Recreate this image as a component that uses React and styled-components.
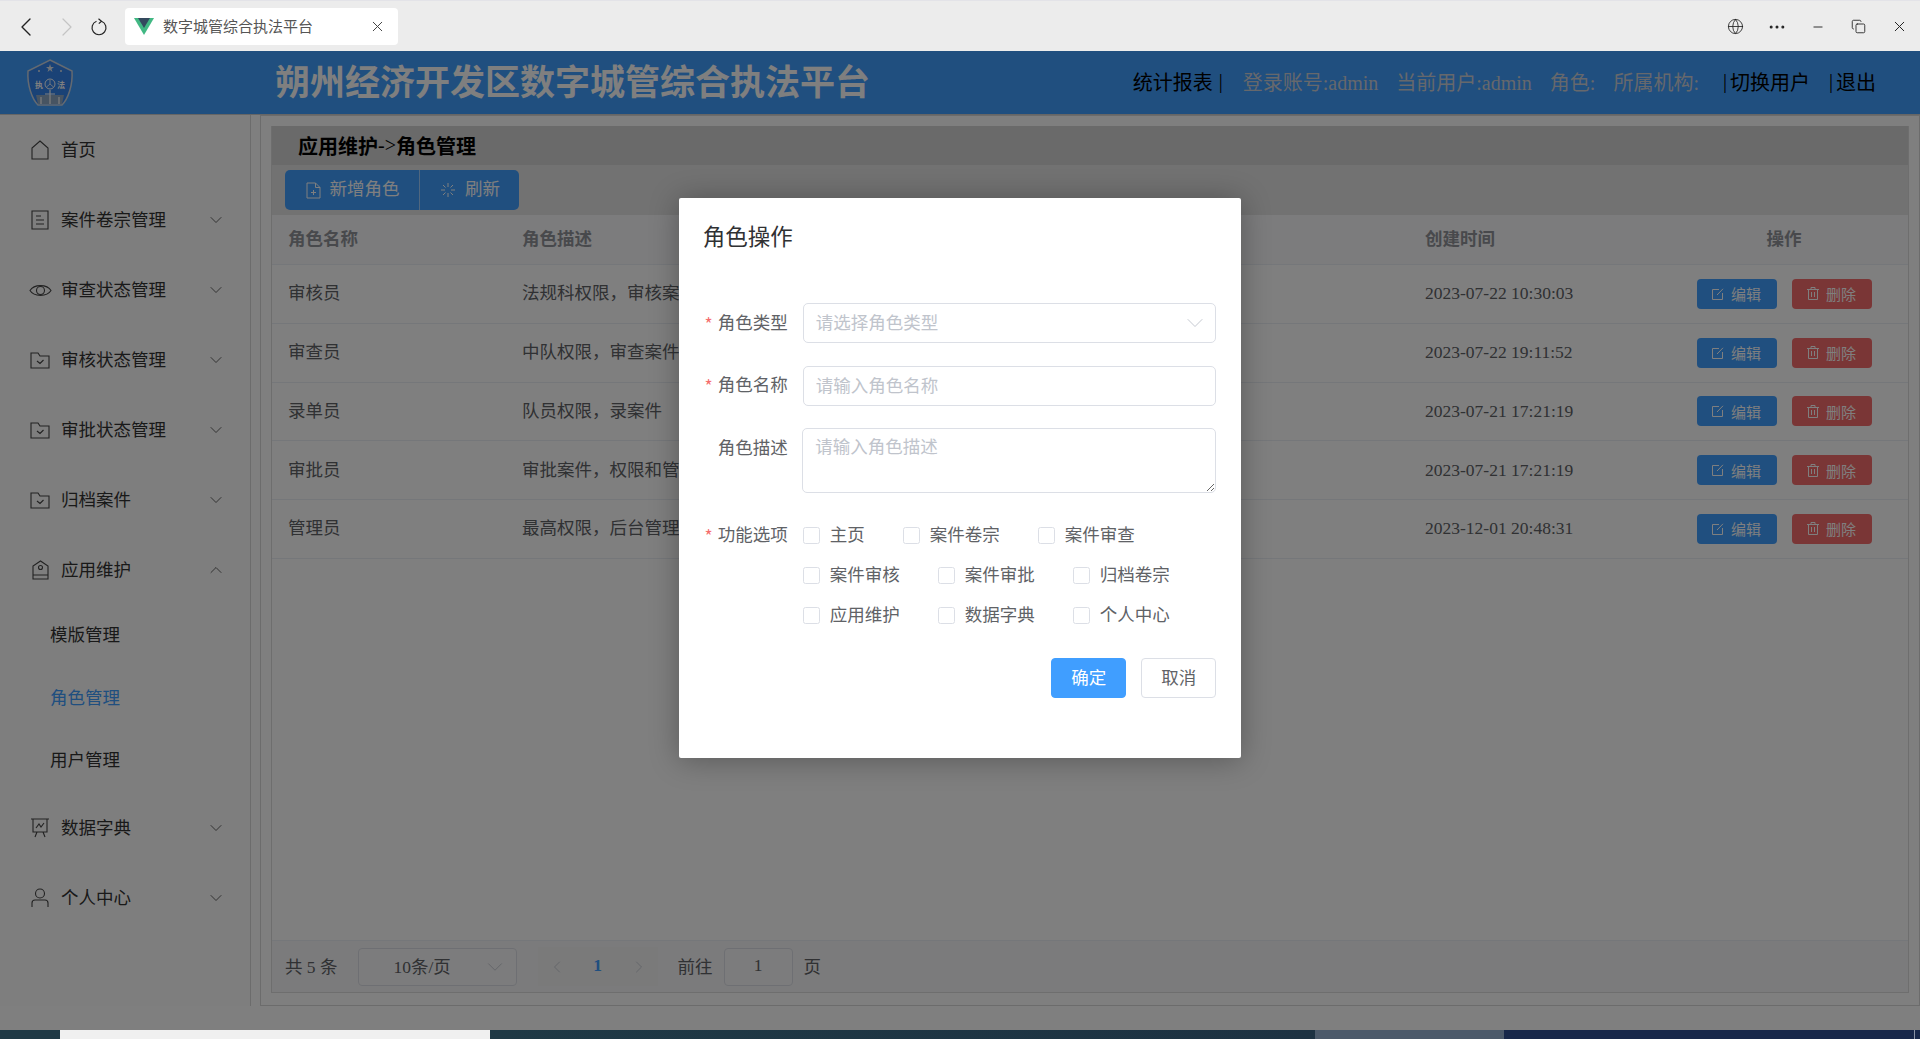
import React from 'react';
import styled, { createGlobalStyle } from 'styled-components';
import { ChevronDown, ChevronUp, ChevronLeft, ChevronRight, X, Globe, Ellipsis, Minus, Copy } from 'lucide-react';

const FONT = '"Liberation Serif", "Noto Sans CJK SC", serif';

const MENU = [
  { label: '首页', icon: 'home' },
  { label: '案件卷宗管理', icon: 'doc', arrow: 'down' },
  { label: '审查状态管理', icon: 'eye', arrow: 'down' },
  { label: '审核状态管理', icon: 'folder', arrow: 'down' },
  { label: '审批状态管理', icon: 'folder', arrow: 'down' },
  { label: '归档案件', icon: 'folder', arrow: 'down' },
  { label: '应用维护', icon: 'stamp', arrow: 'up', children: ['模版管理', '角色管理', '用户管理'] },
  { label: '数据字典', icon: 'board', arrow: 'down' },
  { label: '个人中心', icon: 'user', arrow: 'down' },
];

const ROLES = [
  ['审核员', '法规科权限，审核案件', '2023-07-22 10:30:03'],
  ['审查员', '中队权限，审查案件', '2023-07-22 19:11:52'],
  ['录单员', '队员权限，录案件', '2023-07-21 17:21:19'],
  ['审批员', '审批案件，权限和管理', '2023-07-21 17:21:19'],
  ['管理员', '最高权限，后台管理', '2023-12-01 20:48:31'],
];

const FEATURES = ['主页', '案件卷宗', '案件审查', '案件审核', '案件审批', '归档卷宗', '应用维护', '数据字典', '个人中心'];

const MenuIcon = ({ name }) => {
  const common = { fill: 'none', stroke: 'currentColor', strokeWidth: 1.1 };
  if (name === 'home') {
    return (
      <svg width="18" height="20" viewBox="0 0 18 20" {...common}>
        <path d="M9 1 L17 8 V19 H1 V8 Z" />
      </svg>
    );
  }
  if (name === 'doc') {
    return (
      <svg width="18" height="20" viewBox="0 0 18 20" {...common}>
        <path d="M1 1 H17 V19 H1 Z M5 6 H10 M5 10 H13 M5 14 H13" />
      </svg>
    );
  }
  if (name === 'eye') {
    return (
      <svg width="23" height="15" viewBox="0 0 23 15" {...common}>
        <path d="M1 7.5 C5 1 18 1 22 7.5 C18 14 5 14 1 7.5 Z" />
        <circle cx="11.5" cy="7.5" r="4" />
      </svg>
    );
  }
  if (name === 'folder') {
    return (
      <svg width="20" height="17" viewBox="0 0 20 17" {...common}>
        <path d="M1 1 H8 L10 4 H19 V16 H1 Z M7 9 L10 11.5 L13.5 8" />
      </svg>
    );
  }
  if (name === 'stamp') {
    return (
      <svg width="17" height="20" viewBox="0 0 17 20" {...common}>
        <path d="M1 15 V6 L8.5 1 L16 6 V15 Z M1 15 V19 H16 V15" />
        <circle cx="8.5" cy="7.5" r="2" />
      </svg>
    );
  }
  if (name === 'board') {
    return (
      <svg width="20" height="20" viewBox="0 0 20 20" {...common}>
        <path d="M1 1 H19 M3 1 V14 H17 V1 M7 14 L5 19 M13 14 L15 19 M6 10 L9 6 L11 9 L14 5" />
      </svg>
    );
  }
  return (
    <svg width="18" height="20" viewBox="0 0 18 20" {...common}>
      <circle cx="9" cy="5.5" r="4.5" />
      <path d="M1 19 V15 Q1 12 4 12 H14 Q17 12 17 15 V19" />
    </svg>
  );
};

const VueLogo = () => (
  <svg width="20" height="17" viewBox="0 0 20 17">
    <path d="M0 0 H20 L10 17 Z" fill="#41b883" />
    <path d="M4 0 H16 L10 10 Z" fill="#34495e" />
  </svg>
);

const ReloadIcon = () => (
  <svg width="18" height="18" viewBox="0 0 18 18" fill="none" stroke="#222" strokeWidth="1.2">
    <path d="M11.5 3.2 A7 7 0 1 1 6.5 3.2 M8.5 .8 L11.5 3.2 L8.8 5.6" />
  </svg>
);

const Badge = () => (
  <svg width="48" height="48" viewBox="0 0 48 48">
    <path d="M24 1 L46 12 C47 26 42 40 36 46 H12 C6 40 1 26 2 12 Z" fill="#3484ec" stroke="#c8d4e2" strokeWidth="1.5" />
    <path d="M24 5 L25 8 H28 L25.5 10 L26.5 13 L24 11 L21.5 13 L22.5 10 L20 8 H23 Z" fill="#dfe6ee" />
    <circle cx="13" cy="12" r="1" fill="#dfe6ee" />
    <circle cx="35" cy="12" r="1" fill="#dfe6ee" />
    <circle cx="24" cy="25" r="5" fill="none" stroke="#ffffff" strokeWidth="1" />
    <path d="M24 21 V25 L20.5 28 M24 25 L27.5 28" stroke="#ffffff" strokeWidth="0.8" fill="none" />
    <text x="9" y="29" fontSize="8" fontWeight="700" fill="#ffffff" fontFamily="Noto Sans CJK SC">执</text>
    <text x="31" y="29" fontSize="8" fontWeight="700" fill="#ffffff" fontFamily="Noto Sans CJK SC">法</text>
    <path d="M10 36 H38 L36 45 H12 Z" fill="#8ea8c4" />
    <path d="M24 31 V45 M19 35 H29 M15 38 V45 M33 38 V45" stroke="#ffffff" strokeWidth="1.2" fill="none" />
  </svg>
);

const PlusFile = () => (
  <svg width="15" height="17" viewBox="0 0 15 17" fill="none" stroke="currentColor" strokeWidth="1">
    <path d="M1 1 H9.5 L14 5.5 V16 H1 Z M9.5 1 V5.5 H14 M7.5 8 V13 M5 10.5 H10" />
  </svg>
);

const Spinner = () => (
  <svg width="16" height="16" viewBox="0 0 16 16" fill="none" stroke="currentColor" strokeWidth="1">
    <path d="M8 1 V5 M8 11 V15 M1 8 H5 M11 8 H15 M3 3 L5.5 5.5 M13 3 L10.5 5.5 M3 13 L5.5 10.5 M13 13 L10.5 10.5" />
  </svg>
);

const EditIcon = () => (
  <svg width="12" height="12" viewBox="0 0 12 12" fill="none" stroke="currentColor" strokeWidth="1">
    <path d="M7 1.5 H.5 V11.5 H10.5 V5 M5 7 L11 .8" />
  </svg>
);

const TrashIcon = () => (
  <svg width="12" height="13" viewBox="0 0 12 13" fill="none" stroke="currentColor" strokeWidth="1">
    <path d="M0 2.5 H12 M4 2.5 V.5 H8 V2.5 M1.5 2.5 V12.5 H10.5 V2.5 M4.5 5 V10 M7.5 5 V10" />
  </svg>
);

const App = () => (
  <Page>
    <GlobalStyle />
    <BrowserBar>
      <NavIcon $width={40}><ChevronLeft size={32} strokeWidth={1} color="#222" /></NavIcon>
      <NavIcon $width={42}><ChevronRight size={32} strokeWidth={0.9} color="#c4c4c4" /></NavIcon>
      <NavIcon $width={21}><ReloadIcon /></NavIcon>
      <BrowserTab>
        <VueLogo />
        <TabTitle>数字城管综合执法平台</TabTitle>
        <X size={17} strokeWidth={1.4} color="#444" />
      </BrowserTab>
      <WindowTools>
        <ToolCell><Globe size={17} strokeWidth={1.2} color="#222" /></ToolCell>
        <ToolCell><Ellipsis size={20} strokeWidth={1.6} color="#222" /></ToolCell>
        <ToolCell><Minus size={14} strokeWidth={1.6} color="#222" /></ToolCell>
        <ToolCell><Copy size={15} strokeWidth={1.4} color="#222" /></ToolCell>
        <ToolCell><X size={17} strokeWidth={1.4} color="#222" /></ToolCell>
      </WindowTools>
    </BrowserBar>

    <Viewport>
      <Header>
        <LogoCell><Badge /></LogoCell>
        <SiteTitle>朔州经济开发区数字城管综合执法平台</SiteTitle>
        <HeaderLinks>
          <HeaderLink>统计报表</HeaderLink>
          <Pipe $gap={20}>|</Pipe>
          <HeaderInfo>登录账号:admin</HeaderInfo>
          <HeaderInfo>当前用户:admin</HeaderInfo>
          <HeaderInfo>角色:</HeaderInfo>
          <HeaderInfo>所属机构:</HeaderInfo>
          <Pipe $gap={3}>|</Pipe>
          <HeaderLink>切换用户</HeaderLink>
          <Pipe $left={19} $gap={3}>|</Pipe>
          <HeaderLink>退出</HeaderLink>
        </HeaderLinks>
      </Header>

      <Body>
        <Sidebar>
          {MENU.map((item) => (
            <div key={item.label}>
              <MenuRow>
                <IconBox><MenuIcon name={item.icon} /></IconBox>
                <MenuLabel>{item.label}</MenuLabel>
                {item.arrow === 'down' && <ChevronDown size={20} strokeWidth={0.9} />}
                {item.arrow === 'up' && <ChevronUp size={20} strokeWidth={0.9} />}
              </MenuRow>
              {item.children && item.children.map((child) => (
                <SubRow key={child} $active={child === '角色管理'}>{child}</SubRow>
              ))}
            </div>
          ))}
        </Sidebar>

        <Outer>
          <Panel>
            <Crumb>
              <b>应用维护</b>-&gt;<b>角色管理</b>
            </Crumb>
            <Toolbar>
              <ButtonGroup>
                <GroupButton $width={134}><PlusFile /><RaisedText>新增角色</RaisedText></GroupButton>
                <GroupButton $width={100}><Spinner /><RaisedText>刷新</RaisedText></GroupButton>
              </ButtonGroup>
            </Toolbar>
            <TableArea>
              <HeadRow>
                <HeadCell>角色名称</HeadCell>
                <HeadCell>角色描述</HeadCell>
                <HeadCell>创建时间</HeadCell>
                <HeadCell $center>操作</HeadCell>
              </HeadRow>
              {ROLES.map(([name, desc, time]) => (
                <DataRow key={name}>
                  <Cell><RaisedText>{name}</RaisedText></Cell>
                  <Cell><RaisedText>{desc}</RaisedText></Cell>
                  <Cell>{time}</Cell>
                  <ActionCell>
                    <SmallButton $color="#409eff"><EditIcon />编辑</SmallButton>
                    <SmallButton $color="#f56c6c"><TrashIcon />删除</SmallButton>
                  </ActionCell>
                </DataRow>
              ))}
            </TableArea>
            <Pager>
              <PagerText>共 5 条</PagerText>
              <PageSize>
                <span>10条/页</span>
                <ChevronDown size={26} strokeWidth={0.8} />
              </PageSize>
              <PageNumbers>
                <ChevronLeft size={20} strokeWidth={1} />
                <CurrentPage>1</CurrentPage>
                <ChevronRight size={20} strokeWidth={1} />
              </PageNumbers>
              <PagerText>前往</PagerText>
              <PageJump>1</PageJump>
              <PagerText>页</PagerText>
            </Pager>
          </Panel>
        </Outer>
      </Body>

      <Mask>
        <Dialog>
          <DialogTitle>角色操作</DialogTitle>
          <Form>
            <FormRow>
              <FormLabel $required><RaisedText>角色类型</RaisedText></FormLabel>
              <FakeSelect>
                <Placeholder>请选择角色类型</Placeholder>
                <ChevronDown size={28} strokeWidth={0.8} color="#c0c4cc" />
              </FakeSelect>
            </FormRow>
            <FormRow>
              <FormLabel $required><RaisedText>角色名称</RaisedText></FormLabel>
              <TextInput placeholder="请输入角色名称" readOnly />
            </FormRow>
            <FormRow>
              <FormLabel><RaisedText>角色描述</RaisedText></FormLabel>
              <TextArea placeholder="请输入角色描述" readOnly />
            </FormRow>
            <FormRow>
              <FormLabel $required><RaisedText>功能选项</RaisedText></FormLabel>
              <CheckGroup>
                {FEATURES.map((feature) => (
                  <CheckItem key={feature}>
                    <CheckBox />
                    <RaisedText>{feature}</RaisedText>
                  </CheckItem>
                ))}
              </CheckGroup>
            </FormRow>
            <Footer>
              <DialogButton $primary><RaisedText>确定</RaisedText></DialogButton>
              <DialogButton><RaisedText>取消</RaisedText></DialogButton>
            </Footer>
          </Form>
        </Dialog>
      </Mask>
    </Viewport>

    <Taskbar>
      <TaskSegment $width="60px" $bg="#1f3945" />
      <TaskSegment $width="430px" $bg="#f0f0f0" />
      <TaskSegment $width="825px" $bg="linear-gradient(90deg, #1f3945, #1d3242)" />
      <TaskSegment $width="189px" $bg="#4c5a6a" />
      <TaskSegment $width="410px" $bg="#18284a"><Clock>15:20</Clock></TaskSegment>
      <TaskSegment $width="6px" $bg="#18284a" $line />
    </Taskbar>
  </Page>
);

export default App;

const GlobalStyle = createGlobalStyle`
  html, body {
    margin: 0;
    padding: 0;
    overflow: hidden;
    background: #fff;
  }
  * {
    box-sizing: border-box;
  }
`;

const Page = styled.div`
  width: 1920px;
  height: 1039px;
  display: flex;
  flex-direction: column;
  overflow: hidden;
  font-family: ${FONT};
  font-size: 17.5px;
`;

const RaisedText = styled.span`
  position: relative;
  top: -2px;
`;

const BrowserBar = styled.div`
  height: 51px;
  display: flex;
  align-items: center;
  padding: 1px 0 0 6px;
  background: #ececec;
  border-top: 1px solid #e3e3e8;
`;

const NavIcon = styled.div`
  width: ${(p) => p.$width}px;
  display: flex;
  justify-content: center;
  flex-shrink: 0;
`;

const BrowserTab = styled.div`
  width: 273px;
  height: 37px;
  margin-left: 16px;
  display: flex;
  align-items: center;
  padding: 0 12px 0 9px;
  background: #fff;
  border-radius: 4px;
`;

const TabTitle = styled.span`
  flex: 1;
  margin: -3px 0 0 9px;
  font-size: 15px;
  color: #555;
  font-family: "Noto Sans CJK SC", sans-serif;
`;

const WindowTools = styled.div`
  margin-left: auto;
  display: grid;
  grid-template-columns: repeat(5, 41px);
`;

const ToolCell = styled.div`
  display: flex;
  align-items: center;
  justify-content: center;
`;

const Viewport = styled.div`
  position: relative;
  height: 979px;
  flex-shrink: 0;
  background: #fff;
`;

const Header = styled.div`
  height: 64px;
  display: flex;
  align-items: center;
  background: #409eff;
  border-bottom: 1px solid #ccc;
`;

const LogoCell = styled.div`
  width: 275px;
  padding-left: 26px;
  display: flex;
`;

const SiteTitle = styled.div`
  font-size: 35px;
  font-weight: 700;
  color: #fff;
  font-family: "Noto Sans CJK SC", sans-serif;
  margin-top: -6px;
`;

const HeaderLinks = styled.div`
  margin-left: auto;
  display: flex;
  align-items: center;
  padding-right: 44px;
  font-size: 20px;
  margin-top: -3px;
`;

const HeaderLink = styled.span`
  color: #000;
`;

const HeaderInfo = styled.span`
  color: #ccd0d8;
  margin-right: 18px;
`;

const Pipe = styled.span`
  color: #000;
  font-size: 20px;
  margin-left: ${(p) => p.$left || 6}px;
  margin-right: ${(p) => p.$gap}px;
`;

const Body = styled.div`
  height: 891px;
  display: flex;
`;

const Sidebar = styled.div`
  width: 251px;
  flex-shrink: 0;
  border-right: 1px solid #d8d8d8;
  background: #fcfcfc;
  color: #333;
`;

const MenuRow = styled.div`
  height: 70px;
  display: flex;
  align-items: center;
  padding: 0 24px 0 25px;
  color: #333;
  svg {
    flex-shrink: 0;
  }
`;

const IconBox = styled.span`
  width: 30px;
  margin-right: 6px;
  display: flex;
  justify-content: center;
  color: #444;
`;

const MenuLabel = styled.span`
  flex: 1;
  margin-top: -3px;
`;

const SubRow = styled.div`
  height: 62.5px;
  line-height: 61.5px;
  padding-left: 50px;
  color: ${(p) => (p.$active ? '#409eff' : '#333')};
`;

const Outer = styled.div`
  flex: 1;
  margin-left: 9px;
  padding: 10px 10px 12px 10px;
  border: 1px solid #d8d8d8;
  min-width: 0;
`;

const Panel = styled.div`
  height: 100%;
  display: flex;
  flex-direction: column;
  border: 1px solid #ddd;
  border-top: none;
`;

const Crumb = styled.div`
  height: 39px;
  flex-shrink: 0;
  display: flex;
  align-items: center;
  padding-left: 26px;
  background: #d4d4d4;
  color: #000;
  font-size: 20px;
  b {
    font-weight: 700;
  }
`;

const Toolbar = styled.div`
  height: 50px;
  flex-shrink: 0;
  display: flex;
  align-items: center;
  padding-left: 13px;
  background: #e4e4e4;
`;

const ButtonGroup = styled.div`
  height: 40px;
  display: flex;
  background: #409eff;
  border-radius: 5px;
`;

const GroupButton = styled.div`
  width: ${(p) => p.$width}px;
  display: flex;
  align-items: center;
  justify-content: center;
  gap: 9px;
  padding: 0 0 2px 1px;
  color: #fff;
  & + & {
    border-left: 1px solid rgba(255, 255, 255, 0.5);
  }
  svg {
    margin-top: 2px;
  }
`;

const TableArea = styled.div`
  flex: 1;
  min-height: 0;
`;

const COLUMNS = '234px 903px 250px 250px';

const HeadRow = styled.div`
  height: 50px;
  display: grid;
  grid-template-columns: ${COLUMNS};
  align-items: center;
  background: #f8f8fa;
  border-bottom: 1px solid #ebeef5;
`;

const HeadCell = styled.div`
  margin-top: -4px;
  padding-left: ${(p) => (p.$center ? 0 : 16)}px;
  text-align: ${(p) => (p.$center ? 'center' : 'left')};
  font-weight: 700;
  color: #909399;
`;

const DataRow = styled.div`
  height: 58.75px;
  display: grid;
  grid-template-columns: ${COLUMNS};
  align-items: center;
  border-bottom: 1px solid #ebeef5;
`;

const Cell = styled.div`
  padding-left: 16px;
  color: #606266;
`;

const ActionCell = styled.div`
  display: flex;
  justify-content: center;
  gap: 15px;
`;

const SmallButton = styled.div`
  width: 80px;
  height: 30px;
  display: flex;
  align-items: center;
  justify-content: center;
  gap: 7px;
  background: ${(p) => p.$color};
  border-radius: 4px;
  color: #fff;
  font-size: 15px;
`;

const Pager = styled.div`
  height: 52px;
  flex-shrink: 0;
  display: flex;
  align-items: center;
  padding-left: 13px;
  background: #f7f7f9;
  border-top: 1px solid #ebeef5;
  color: #606266;
`;

const PagerText = styled.span`
  white-space: nowrap;
  margin-top: -3px;
`;

const PageSize = styled.div`
  width: 159px;
  height: 38px;
  margin: 0 21px 0 20px;
  display: flex;
  align-items: center;
  justify-content: space-between;
  padding: 0 8px 2px 35px;
  border: 1px solid #dcdfe6;
  border-radius: 4px;
  background: #f9f9fb;
  svg {
    color: #c0c4cc;
    margin-top: 2px;
  }
`;

const PageNumbers = styled.div`
  width: 120px;
  height: 39px;
  margin-right: 20px;
  display: flex;
  align-items: center;
  justify-content: space-between;
  padding: 0 9px;
  background: #f4f4f5;
  color: #c0c4cc;
`;

const CurrentPage = styled.span`
  color: #409eff;
  font-weight: 700;
  margin-top: -2px;
`;

const PageJump = styled.div`
  width: 69px;
  height: 38px;
  margin: 0 11px;
  padding-bottom: 2px;
  display: flex;
  align-items: center;
  justify-content: center;
  border: 1px solid #dcdfe6;
  border-radius: 4px;
  background: #f9f9fb;
`;

const Mask = styled.div`
  position: absolute;
  inset: 0;
  background: rgba(0, 0, 0, 0.5);
  overflow: hidden;
`;

const Dialog = styled.div`
  width: 562.5px;
  height: 560px;
  margin: 147px auto 0;
  padding: 25px 25px 0;
  background: #fff;
  border-radius: 2px;
  box-shadow: 0 2px 30px rgba(0, 0, 0, 0.3);
  font-family: "Noto Sans CJK SC", sans-serif;
`;

const DialogTitle = styled.div`
  height: 28px;
  line-height: 24px;
  font-size: 22.5px;
  margin-left: -1px;
  color: #303133;
`;

const Form = styled.div`
  margin-top: 52px;
  display: flex;
  flex-direction: column;
  gap: 22.5px;
`;

const FormRow = styled.div`
  display: flex;
  align-items: flex-start;
`;

const FormLabel = styled.div`
  width: 99px;
  flex-shrink: 0;
  height: 40px;
  padding-right: 15px;
  display: flex;
  align-items: center;
  justify-content: flex-end;
  white-space: nowrap;
  color: #606266;
  &::before {
    content: '${(p) => (p.$required ? '*' : '')}';
    color: #f56c6c;
    margin-right: 5px;
  }
`;

const FakeSelect = styled.div`
  flex: 1;
  height: 40px;
  display: flex;
  align-items: center;
  justify-content: space-between;
  padding: 0 6px 0 12px;
  border: 1px solid #dcdfe6;
  border-radius: 5px;
`;

const Placeholder = styled.span`
  color: #c0c4cc;
  margin-top: -4px;
`;

const TextInput = styled.input`
  flex: 1;
  min-width: 0;
  height: 40px;
  padding: 0 12px 3px;
  border: 1px solid #dcdfe6;
  border-radius: 5px;
  outline: none;
  font: inherit;
  color: #606266;
  &::placeholder {
    color: #c0c4cc;
  }
`;

const TextArea = styled.textarea`
  flex: 1;
  min-width: 0;
  height: 65px;
  margin-left: -0.5px;
  padding: 4px 12px;
  border: 1px solid #dcdfe6;
  border-radius: 5px;
  outline: none;
  font: inherit;
  line-height: 26px;
  color: #606266;
  &::placeholder {
    color: #c0c4cc;
  }
`;

const CheckGroup = styled.div`
  flex: 1;
  display: flex;
  flex-wrap: wrap;
  column-gap: 38px;
`;

const CheckItem = styled.div`
  height: 40px;
  display: flex;
  align-items: center;
  gap: 10px;
  color: #606266;
`;

const CheckBox = styled.span`
  width: 17px;
  height: 17px;
  border: 1px solid #dcdfe6;
  border-radius: 2.5px;
`;

const Footer = styled.div`
  display: flex;
  justify-content: flex-end;
  gap: 15px;
`;

const DialogButton = styled.div`
  width: 75px;
  height: 40px;
  display: flex;
  align-items: center;
  justify-content: center;
  border-radius: 4px;
  border: 1px solid ${(p) => (p.$primary ? '#409eff' : '#dcdfe6')};
  background: ${(p) => (p.$primary ? '#409eff' : '#fff')};
  color: ${(p) => (p.$primary ? '#fff' : '#606266')};
`;

const Taskbar = styled.div`
  height: 9px;
  flex-shrink: 0;
  display: flex;
  overflow: hidden;
`;

const TaskSegment = styled.div`
  width: ${(p) => p.$width};
  height: 9px;
  flex-shrink: 0;
  background: ${(p) => p.$bg};
  border-left: ${(p) => (p.$line ? '1px solid #8a94a6' : 'none')};
  overflow: hidden;
`;

const Clock = styled.span`
  display: block;
  margin: 6px 0 0 286px;
  font-family: "Noto Sans", sans-serif;
  font-size: 15px;
  line-height: 18px;
  color: #fff;
`;
